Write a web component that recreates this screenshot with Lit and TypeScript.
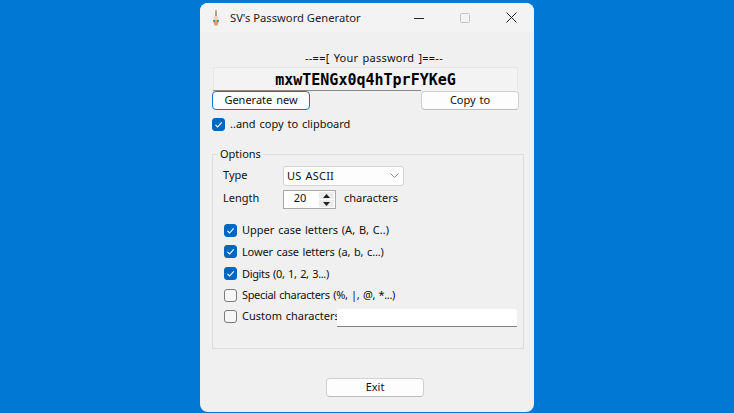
import { LitElement, html, css, svg } from "lit";
import { customElement } from "lit/decorators.js";

@customElement("app-root")
export class AppRoot extends LitElement {
  static styles = css`
    :host {
      display: block;
      box-sizing: border-box;
      width: 734px;
      height: 413px;
      padding: 3px 200px 1px;
      background: #0078d4;
      font-family: "Noto Sans", "Liberation Sans", sans-serif;
      font-size: 11px;
      word-spacing: 1px;
      color: #111;
      overflow: hidden;
    }
    * { box-sizing: border-box; }
    .win {
      height: 409px;
      background: #f0f0f0;
      border-radius: 8px;
      overflow: hidden;
      display: flex;
      flex-direction: column;
    }
    .title {
      height: 29px;
      flex: none;
      display: flex;
      align-items: center;
      background: #f3f3f3;
      padding-left: 12px;
    }
    .app-icon { width: 8px; height: 16px; flex: none; }
    .title-text { margin-left: 10px; font-size: 11.2px; word-spacing: 0; color: #222; flex: 1; white-space: nowrap; }
    .caps { display: flex; align-items: center; }
    .cap { width: 46px; height: 29px; display: flex; align-items: center; justify-content: center; }
    .body { padding: 0 10px 0 12px; flex: 1; display: flex; flex-direction: column; align-items: flex-start; }
    .heading {
      margin-top: 18px;
      height: 16px;
      width: 307px;
      padding-left: 17px;
      text-align: center;
      line-height: 16px;
      letter-spacing: 0.25px;
      white-space: nowrap;
    }
    .pw {
      margin-top: 1px;
      margin-left: 1px;
      width: 305px;
      height: 24px;
      background: #f3f3f3;
      border: 1px solid #e6e6e6;
      border-bottom: none;
      position: relative;
      display: flex;
      align-items: center;
      justify-content: center;
      font-family: "DejaVu Sans Mono", "Liberation Mono", monospace;
      font-weight: 700;
      font-size: 15px;
      word-spacing: 0;
      color: #000;
    }
    .pw::after {
      content: "";
      position: absolute;
      left: -1px;
      bottom: 0;
      width: 208px;
      height: 1px;
      background: #8a8a8a;
    }
    .btn-row { width: 307px; display: flex; justify-content: space-between; }
    .btn {
      width: 98px;
      height: 19px;
      padding-bottom: 2px;
      background: #fdfdfd;
      border: 1px solid #d0d0d0;
      border-bottom-color: #bcbcbc;
      border-radius: 4px;
      display: flex;
      align-items: center;
      justify-content: center;
      color: #111;
      white-space: nowrap;
    }
    .btn.focus { border: 1px solid #1a74c4; }
    .check-row { display: flex; align-items: center; height: 13px; white-space: nowrap; }
    .top-check { margin-top: 7px; }
    .top-check .box { margin-top: 1px; }
    .box {
      width: 13px;
      height: 13px;
      flex: none;
      border-radius: 3px;
      border: 1px solid #7a7a7a;
      background: #f6f6f6;
    }
    .box.on {
      background: #0067c0;
      border-color: #0067c0;
      display: flex;
      align-items: center;
      justify-content: center;
    }
    .box svg { width: 9px; height: 9px; display: block; }
    .lbl { margin-left: 5px; padding-bottom: 1px; }
    .lbl.tight { letter-spacing: -0.15px; }
    .lbl.tighter { letter-spacing: -0.35px; }
    .group {
      margin-top: 24px;
      width: 312px;
      height: 195px;
      border: 1px solid #dcdcdc;
      position: relative;
      padding: 11px 0 0 10px;
    }
    .legend {
      position: absolute;
      left: 5px;
      top: -9px;
      padding: 0 2px;
      background: #f0f0f0;
      line-height: 15px;
    }
    .field { display: flex; align-items: center; }
    .field-lbl { width: 60px; flex: none; padding-bottom: 4px; }
    .select {
      width: 121px;
      height: 20px;
      background: #fdfdfd;
      border: 1px solid #d4d4d4;
      border-radius: 3px;
      display: flex;
      align-items: center;
      justify-content: space-between;
      padding: 0 4px 1px 3px;
      letter-spacing: 0.2px;
    }
    .length { margin-top: 4px; }
    .spin {
      width: 53px;
      height: 19px;
      background: #fff;
      border: 1px solid #a8a8a8;
      display: flex;
      align-items: stretch;
    }
    .spin-val { flex: 1; text-align: center; line-height: 14px; padding-right: 2px; }
    .spin-btns { width: 15px; margin: 1px; display: flex; flex-direction: column; gap: 1px; }
    .spin-btn {
      flex: 1;
      background: #ececec;
      display: flex;
      align-items: center;
      justify-content: center;
    }
    .chars { margin-left: 8px; padding-bottom: 4px; }
    .checks { margin-top: 14.7px; margin-left: 1px; display: flex; flex-direction: column; gap: 8.7px; }
    .custom { align-items: flex-start; }
    .custom .box { margin-right: 5px; }
    .custom-lbl { width: 95px; line-height: 12px; flex: none; }
    .input {
      width: 180px;
      height: 18px;
      margin: -1px 0 -4px;
      background: #fff;
      border-bottom: 1px solid #808080;
      border-radius: 2px 2px 0 0;
    }
    .exit { margin-top: 29px; margin-left: 114px; }
  `;

  private check = svg`<svg viewBox="0 0 10 10"><path d="M1.6 5.4 L4 7.8 L8.6 2.6" fill="none" stroke="#fff" stroke-width="1.3"/></svg>`;

  private checkbox(on: boolean, label: string, tight = "") {
    return html`<div class="check-row">
      <div class="box ${on ? "on" : ""}">${on ? this.check : ""}</div>
      <span class="lbl ${tight}">${label}</span>
    </div>`;
  }

  render() {
    return html`
      <div class="win">
        <div class="title">
          <svg class="app-icon" viewBox="0 0 8 16">
            <path d="M3.3 0 L4.7 0 L5 6 L3 6 Z" fill="#a89880"/>
            <path d="M2.4 6 L5.6 6 L7 10 L1 10 Z" fill="#ecd2b6"/>
            <path d="M1 10 L7 10 L6.6 12 L1.4 12 Z" fill="#3f8fa8"/>
            <path d="M1.4 12 L6.6 12 L5.6 15.5 L2.4 15.5 Z" fill="#d8a070"/>
            <rect x="3" y="10" width="2" height="2" fill="#d9b04a"/>
          </svg>
          <span class="title-text">SV's Password Generator</span>
          <div class="caps">
            <div class="cap">
              <svg width="10" height="10" viewBox="0 0 10 10"><path d="M0 5.5 H10" stroke="#222" stroke-width="1"/></svg>
            </div>
            <div class="cap">
              <svg width="10" height="10" viewBox="0 0 10 10"><rect x="0.5" y="0.5" width="9" height="9" rx="1" fill="none" stroke="#c4c4c4"/></svg>
            </div>
            <div class="cap">
              <svg width="11" height="11" viewBox="0 0 11 11"><path d="M0.5 0.5 L10.5 10.5 M10.5 0.5 L0.5 10.5" stroke="#222" stroke-width="1"/></svg>
            </div>
          </div>
        </div>
        <div class="body">
          <div class="heading">--==[ Your password ]==--</div>
          <div class="pw">mxwTENGx0q4hTprFYKeG</div>
          <div class="btn-row">
            <div class="btn focus">Generate new</div>
            <div class="btn">Copy to</div>
          </div>
          <div class="check-row top-check">
            <div class="box on">${this.check}</div>
            <span class="lbl">..and copy to clipboard</span>
          </div>
          <div class="group">
            <div class="legend">Options</div>
            <div class="field">
              <span class="field-lbl">Type</span>
              <div class="select">
                <span>US ASCII</span>
                <svg width="9" height="5" viewBox="0 0 9 5"><path d="M0.5 0.5 L4.5 4.5 L8.5 0.5" fill="none" stroke="#888"/></svg>
              </div>
            </div>
            <div class="field length">
              <span class="field-lbl">Length</span>
              <div class="spin">
                <span class="spin-val">20</span>
                <div class="spin-btns">
                  <div class="spin-btn"><svg width="7" height="4" viewBox="0 0 7 4"><path d="M3.5 0 L7 4 H0 Z" fill="#222"/></svg></div>
                  <div class="spin-btn"><svg width="7" height="4" viewBox="0 0 7 4"><path d="M0 0 H7 L3.5 4 Z" fill="#222"/></svg></div>
                </div>
              </div>
              <span class="chars">characters</span>
            </div>
            <div class="checks">
              ${this.checkbox(true, "Upper case letters (A, B, C..)")}
              ${this.checkbox(true, "Lower case letters (a, b, c...)", "tight")}
              ${this.checkbox(true, "Digits (0, 1, 2, 3...)", "tighter")}
              ${this.checkbox(false, "Special characters (%, |, @, *...)", "tighter")}
              <div class="check-row custom">
                <div class="box"></div>
                <span class="custom-lbl">Custom characters</span>
                <div class="input"></div>
              </div>
            </div>
          </div>
          <div class="btn exit">Exit</div>
        </div>
      </div>
    `;
  }
}
